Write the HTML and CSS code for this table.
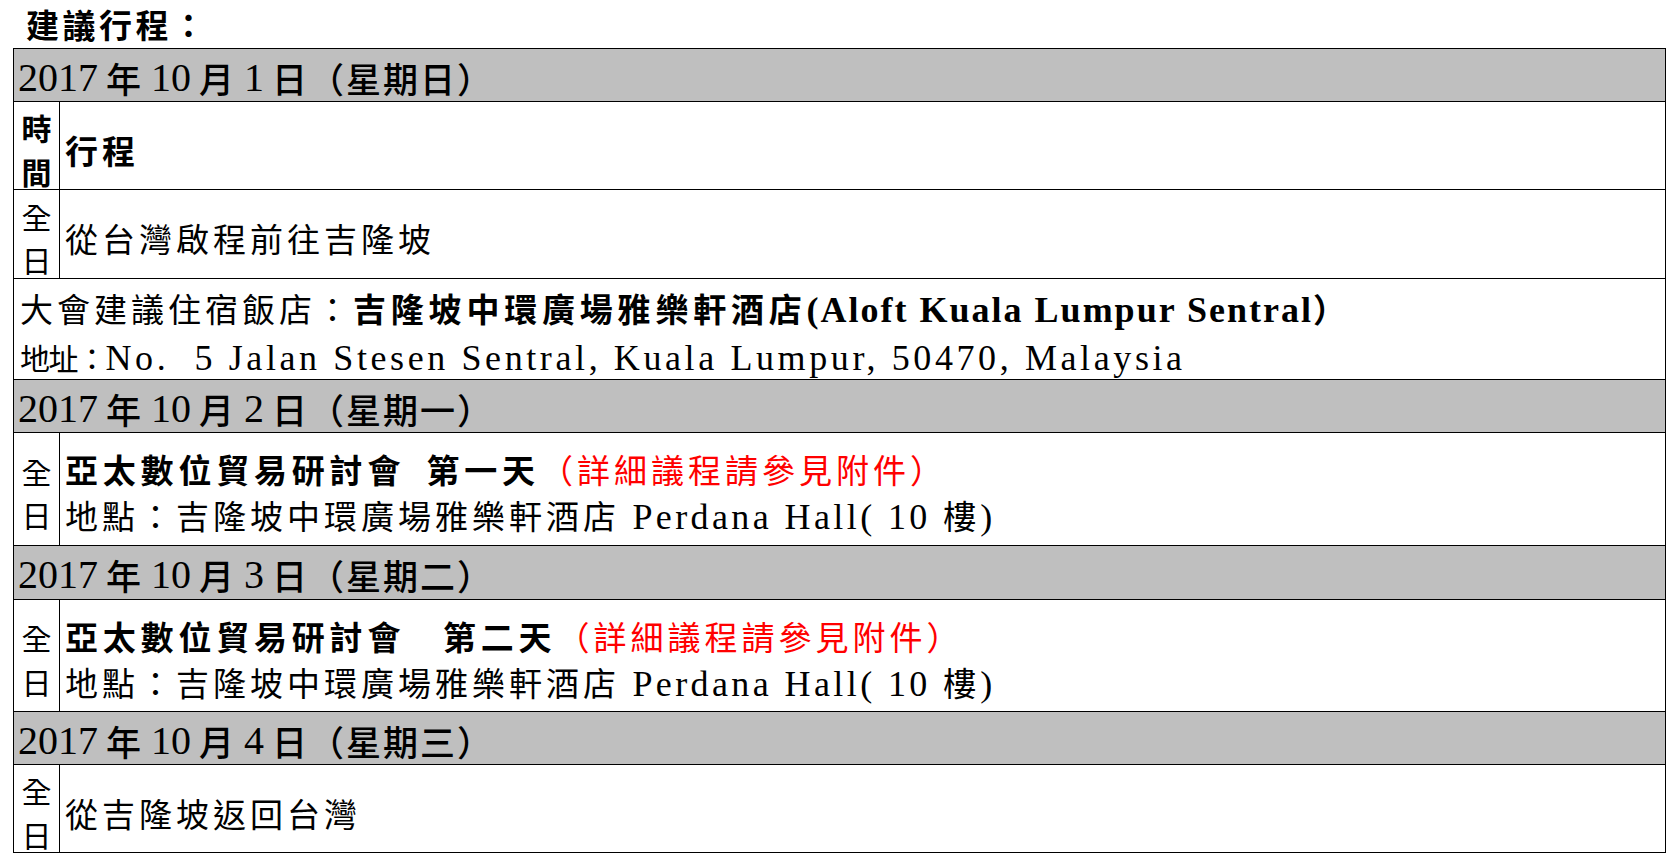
FILE: index.html
```html
<!DOCTYPE html>
<html lang="zh-Hant">
<head>
<meta charset="utf-8">
<title>建議行程</title>
<link rel="stylesheet" href="styles.css">
</head>
<body>
<div class="title">建議行程：</div>
<div class="sched">
  <div class="date h53"><span class="n">2017 </span>年<span class="n"> 10 </span>月<span class="n"> 1 </span>日（星期日）</div>
  <div class="row h88 shift">
    <div class="time bold">時<br>間</div>
    <div class="desc"><div class="line bold">行程</div></div>
  </div>
  <div class="row h89 shift">
    <div class="time">全<br>日</div>
    <div class="desc"><div class="line">從台灣啟程前往吉隆坡</div></div>
  </div>
  <div class="full h101">
    <div class="line">大會建議住宿飯店：<b>吉隆坡中環廣場雅樂軒酒店<span class="lat">(Aloft Kuala Lumpur Sentral</span>）</b></div>
    <div class="line"><span class="small">地址：</span><span class="lat addr">No.&nbsp; 5 Jalan Stesen Sentral, Kuala Lumpur, 50470, Malaysia</span></div>
  </div>
  <div class="date h53"><span class="n">2017 </span>年<span class="n"> 10 </span>月<span class="n"> 2 </span>日（星期一）</div>
  <div class="row h113 shift">
    <div class="time">全<br>日</div>
    <div class="desc">
      <div class="line"><b>亞太數位貿易研討會&ensp;第一天</b><span class="red">（詳細議程請參見附件）</span></div>
      <div class="line">地點：吉隆坡中環廣場雅樂軒酒店<span class="lat"> Perdana Hall( 10 </span>樓<span class="lat">)</span></div>
    </div>
  </div>
  <div class="date h54"><span class="n">2017 </span>年<span class="n"> 10 </span>月<span class="n"> 3 </span>日（星期二）</div>
  <div class="row h112 shift">
    <div class="time">全<br>日</div>
    <div class="desc">
      <div class="line"><b>亞太數位貿易研討會　第二天</b><span class="red">（詳細議程請參見附件）</span></div>
      <div class="line">地點：吉隆坡中環廣場雅樂軒酒店<span class="lat"> Perdana Hall( 10 </span>樓<span class="lat">)</span></div>
    </div>
  </div>
  <div class="date h53"><span class="n">2017 </span>年<span class="n"> 10 </span>月<span class="n"> 4 </span>日（星期三）</div>
  <div class="row h88 shift">
    <div class="time">全<br>日</div>
    <div class="desc"><div class="line">從吉隆坡返回台灣</div></div>
  </div>
</div>
</body>
</html>
```

FILE: styles.css
```css
html, body {
  margin: 0;
  padding: 0;
  background: #ffffff;
  color: #000000;
}

body {
  font-family: "Noto Sans CJK TC", "Noto Sans CJK SC", sans-serif;
  font-size: 33px;
  letter-spacing: 4px;
}

.title {
  box-sizing: border-box;
  height: 48px;
  padding-left: 26px;
  font-weight: 700;
  line-height: 48px;
  letter-spacing: 3.5px;
}

.sched {
  box-sizing: border-box;
  width: 1653px;
  margin-left: 13px;
  border: 1px solid #000;
  border-bottom: none;
}

.date {
  box-sizing: border-box;
  display: flex;
  align-items: center;
  padding-left: 4px;
  padding-top: 4px;
  background: #bfbfbf;
  border-bottom: 1px solid #000;
  font-size: 35px;
  font-weight: 500;
  letter-spacing: 2px;
  white-space: pre;
}

.n {
  font-family: "Liberation Serif", serif;
  font-size: 40px;
  font-weight: 400;
  letter-spacing: 0;
  word-spacing: -2px;
}

.row {
  box-sizing: border-box;
  display: flex;
  border-bottom: 1px solid #000;
}

.full {
  box-sizing: border-box;
  display: flex;
  flex-direction: column;
  justify-content: center;
  padding-left: 6px;
  padding-top: 8px;
  border-bottom: 1px solid #000;
}

.shift {
  padding-top: 8px;
}

.time {
  box-sizing: border-box;
  width: 46px;
  margin-top: -8px;
  padding-top: 8px;
  border-right: 1px solid #000;
  display: flex;
  align-items: center;
  justify-content: center;
  text-align: center;
  font-size: 30px;
  line-height: 43.5px;
  letter-spacing: 0;
}

.desc {
  flex: 1;
  display: flex;
  flex-direction: column;
  justify-content: center;
  padding-left: 5px;
}

.line {
  line-height: 46px;
  white-space: pre;
}

.bold, b {
  font-weight: 700;
}

b {
  letter-spacing: 4.8px;
}

.lat {
  font-family: "Liberation Serif", serif;
  font-size: 36px;
  letter-spacing: 3.4px;
}

.lat.addr {
  letter-spacing: 3.6px;
}

b .lat {
  letter-spacing: 2px;
}

.small {
  font-size: 30px;
  letter-spacing: -1.5px;
}

.red {
  color: #ff0000;
}

.h53 { height: 53px; }
.h54 { height: 54px; }
.h88 { height: 88px; }
.h89 { height: 89px; }
.h101 { height: 101px; }
.h112 { height: 112px; }
.h113 { height: 113px; }
```
